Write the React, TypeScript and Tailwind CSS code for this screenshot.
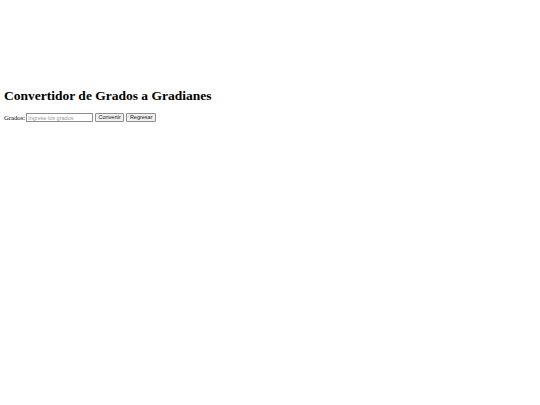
import React, { useState } from 'react';

export default function App() {
  const [deg, setDeg] = useState('');
  return (
    <div className="min-h-[405px] bg-white pl-[4px] pt-[88px] text-black font-['Liberation_Serif',serif]">
      <h1 className="text-[13.5px] font-bold leading-[16px]">Convertidor de Grados a Gradianes</h1>
      <div className="mt-[9px] flex items-center h-[9px] text-[6.7px] leading-[9px]">
        <span className="mr-[1px] text-black">Grados:</span>
        <input
          type="text"
          value={deg}
          onChange={(e) => setDeg(e.target.value)}
          placeholder="Ingrese los grados"
          className="w-[67px] h-[9px] border border-[#8f8f8f] px-[1px] text-[5.5px] leading-[7px] outline-none font-['Liberation_Sans',sans-serif] placeholder:text-[#9a9a9a]"
        />
        <button className="ml-[2px] w-[29px] h-[9px] border border-[#8f8f8f] bg-[#efefef] rounded-[1px] text-[5.5px] leading-[7px] text-[#222] font-['Liberation_Sans',sans-serif]">
          Convertir
        </button>
        <button className="ml-[2px] w-[30px] h-[9px] border border-[#8f8f8f] bg-[#efefef] rounded-[1px] text-[5.5px] leading-[7px] text-[#222] font-['Liberation_Sans',sans-serif]">
          Regresar
        </button>
      </div>
    </div>
  );
}
